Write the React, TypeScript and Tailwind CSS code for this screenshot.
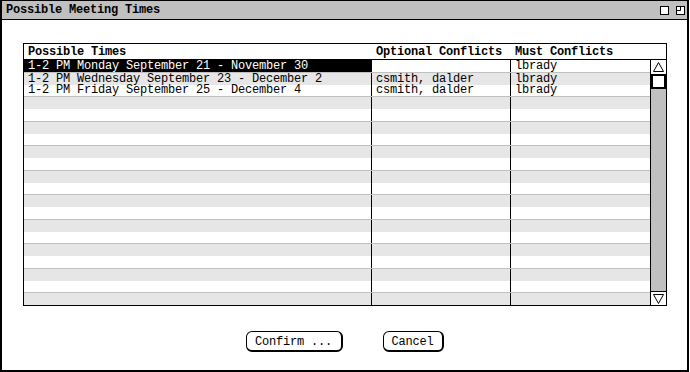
import React from 'react';

const times = [
  { time: '1-2 PM Monday September 21 - November 30', optional: '', must: 'lbrady' },
  { time: '1-2 PM Wednesday September 23 - December 2', optional: 'csmith, dalder', must: 'lbrady' },
  { time: '1-2 PM Friday September 25 - December 4', optional: 'csmith, dalder', must: 'lbrady' },
];

const rowCount = 20;

function Row({ index }) {
  const item = times[index];
  const gray = index % 2 === 1;
  const selected = index === 0;
  const rowBg = gray ? 'bg-[#e6e6e6] border-t border-[#c0c0c0]' : 'bg-white';
  return (
    <div className={`flex flex-1 min-h-0 ${rowBg}`}>
      <div
        className={`w-[348px] shrink-0 border-r border-black pl-[4px] flex items-center leading-[10px] whitespace-nowrap ${
          selected ? 'bg-black text-white' : ''
        }`}
      >
        {item ? item.time : ''}
      </div>
      <div className="w-[139px] shrink-0 border-r border-black pl-[4px] flex items-center leading-[10px] whitespace-nowrap">
        {item ? item.optional : ''}
      </div>
      <div className="flex-1 pl-[4px] flex items-center leading-[10px] whitespace-nowrap">
        {item ? item.must : ''}
      </div>
    </div>
  );
}

function ScrollBar() {
  return (
    <div className="w-[16px] shrink-0 border-l border-black bg-[#c0c0c0] flex flex-col">
      <div className="h-[14px] bg-white flex items-center justify-center">
        <svg width="11" height="10" viewBox="0 0 11 10">
          <path d="M5.5 0.5 L10.5 9.5 L0.5 9.5 Z" fill="none" stroke="black" strokeWidth="1" />
        </svg>
      </div>
      <div className="h-[15px] bg-white border-2 border-black" />
      <div className="flex-1" />
      <div className="h-[14px] bg-white border-t border-black flex items-center justify-center">
        <svg width="11" height="10" viewBox="0 0 11 10">
          <path d="M0.5 0.5 L10.5 0.5 L5.5 9.5 Z" fill="none" stroke="black" strokeWidth="1" />
        </svg>
      </div>
    </div>
  );
}

export default function App() {
  return (
    <div
      className="w-[689px] h-[372px] bg-white text-black text-[12px] tracking-[-0.2px] flex flex-col border-l-2 border-r-2 border-b-2 border-t border-black"
      style={{ fontFamily: '"Liberation Mono", "DejaVu Sans Mono", monospace' }}
    >
      {/* Title bar */}
      <div className="h-[19px] shrink-0 bg-[#c0c0c0] border-b border-black flex items-center pl-[4px] pr-[2px]">
        <span className="font-bold flex-1 leading-[12px]">Possible Meeting Times</span>
        <div className="flex gap-[7px] items-center">
          <svg width="9" height="9" viewBox="0 0 9 9">
            <rect x="0.5" y="0.5" width="8" height="8" fill="white" stroke="black" />
          </svg>
          <svg width="9" height="9" viewBox="0 0 9 9">
            <rect x="0.5" y="0.5" width="8" height="8" fill="white" stroke="black" />
            <path d="M4.5 0.5 V4.5 H0.5" fill="none" stroke="black" />
          </svg>
        </div>
      </div>

      {/* Body */}
      <div className="flex-1 flex flex-col pl-[21px] pt-[23px]">
        <div className="w-[644px] h-[263px] border border-black flex flex-col">
          <div className="h-[16px] shrink-0 border-b border-black flex items-center font-bold leading-[12px] pt-[1px]">
            <div className="w-[348px] pl-[4px]">Possible Times</div>
            <div className="w-[139px] pl-[4px]">Optional Conflicts</div>
            <div className="flex-1 pl-[4px]">Must Conflicts</div>
          </div>
          <div className="flex-1 flex min-h-0">
            <div className="flex-1 flex flex-col">
              {Array.from({ length: rowCount }).map((_, i) => (
                <Row key={i} index={i} />
              ))}
            </div>
            <ScrollBar />
          </div>
        </div>

        {/* Buttons */}
        <div className="flex justify-center gap-[40px] mt-[25px] pr-[21px]">
          <button className="w-[97px] h-[21px] rounded-[6px] border-l border-t border-r-2 border-b-2 border-black bg-white leading-[12px] pt-[1px]">
            Confirm ...
          </button>
          <button className="w-[61px] h-[21px] rounded-[6px] border-l border-t border-r-2 border-b-2 border-black bg-white leading-[12px] pt-[1px]">
            Cancel
          </button>
        </div>
      </div>
    </div>
  );
}
